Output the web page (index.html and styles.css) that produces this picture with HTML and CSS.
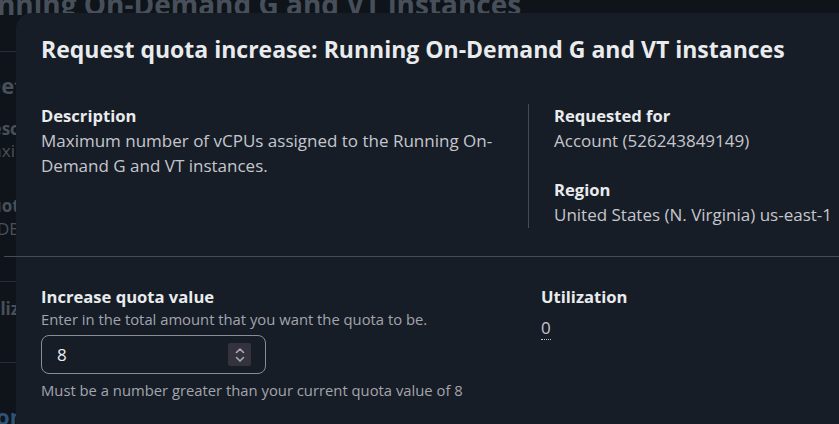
FILE: index.html
```html
<!DOCTYPE html>
<html>
<head>
<meta charset="utf-8">
<link rel="stylesheet" href="styles.css">
</head>
<body>
<div class="page">
  <div class="bg-title">Running On-Demand G and VT instances</div>
  <div class="bg-line l1"></div>
  <div class="bg-text t1">Details</div>
  <div class="bg-text t2">Description</div>
  <div class="bg-text t3">Maximum</div>
  <div class="bg-text t4">Quota</div>
  <div class="bg-text t5">DB1</div>
  <div class="bg-line l2"></div>
  <div class="bg-text t6">Utilization</div>
  <div class="bg-line l3"></div>
  <div class="bg-text t7">Information</div>
</div>
<div class="overlay"></div>
<div class="modal">
  <h1 class="modal-title">Request quota increase: Running On-Demand G and VT instances</h1>
  <div class="top-grid">
    <div class="col left">
      <div class="label">Description</div>
      <div class="value">Maximum number of vCPUs assigned to the Running On-Demand G and VT instances.</div>
    </div>
    <div class="col right">
      <div class="field">
        <div class="label">Requested for</div>
        <div class="value">Account (526243849149)</div>
      </div>
      <div class="field">
        <div class="label">Region</div>
        <div class="value nowrap">United States (N. Virginia) us-east-1</div>
      </div>
    </div>
  </div>
  <div class="divider"></div>
  <div class="bottom-grid">
    <div class="form">
      <div class="label">Increase quota value</div>
      <div class="hint">Enter in the total amount that you want the quota to be.</div>
      <div class="input">
        <span class="input-val">8</span>
        <span class="stepper">
          <svg width="12" height="18" viewBox="0 0 12 18"><path d="M2.5 6.5 L6 3 L9.5 6.5 M2.5 11.5 L6 15 L9.5 11.5" fill="none" stroke="#a9a9b5" stroke-width="1.6" stroke-linecap="round" stroke-linejoin="round"/></svg>
        </span>
      </div>
      <div class="hint after">Must be a number greater than your current quota value of 8</div>
    </div>
    <div class="util">
      <div class="label">Utilization</div>
      <div class="util-val"><span class="dotted">0</span></div>
    </div>
  </div>
</div>
</body>
</html>
```
FILE: styles.css
```css
* { box-sizing: border-box; }
html, body {
  margin: 0;
  padding: 0;
  width: 839px;
  height: 424px;
  overflow: hidden;
  background: #0f141a;
  font-family: "Open Sans", "Noto Sans", sans-serif;
}
.page {
  position: absolute;
  inset: 0;
  color: #8d99a8;
}
.bg-title {
  position: absolute;
  left: -40px;
  top: -15px;
  font-size: 28px;
  font-weight: 700;
  white-space: nowrap;
}
.bg-line {
  position: absolute;
  left: 0;
  width: 40px;
  height: 1px;
  background: #414d5c;
}
.l1 { top: 51px; }
.l2 { top: 281px; }
.l3 { top: 362px; }
.bg-text {
  position: absolute;
  white-space: nowrap;
  font-size: 17px;
}
.t1 { top: 70px; left: -15px; font-size: 22px; font-weight: 700; }
.t2 { top: 117px; left: -21px; font-weight: 700; }
.t3 { top: 139px; left: -23px; }
.t4 { top: 194px; left: -23px; font-weight: 700; }
.t5 { top: 217px; left: -3px; }
.t6 { top: 297px; left: -25px; font-weight: 700; }
.t7 { top: 401px; left: -109px; font-size: 22px; font-weight: 700; color: #539fe5; }

.overlay {
  position: absolute;
  inset: 0;
  background: rgba(15, 20, 26, 0.55);
}
.modal {
  position: absolute;
  left: 16px;
  top: 13px;
  width: 1000px;
  height: 500px;
  background: #161d26;
  border-top-left-radius: 16px;
  padding: 20px 0 0 25px;
  color: #c6c6cd;
}
.modal-title {
  margin: 0;
  font-size: 23px;
  line-height: 32px;
  font-weight: 700;
  color: #e9ebed;
}
.top-grid {
  display: flex;
  margin-top: 39px;
}
.col.left {
  width: 488px;
  padding-right: 18px;
  border-right: 1px solid #414d5c;
  min-height: 124px;
}
.col.right {
  padding-left: 25px;
  display: flex;
  flex-direction: column;
  gap: 25px;
}
.label {
  font-size: 16.6px;
  line-height: 24px;
  font-weight: 700;
  color: #e9ebed;
}
.value {
  font-size: 17px;
  line-height: 25px;
  color: #c6c6cd;
}
.nowrap { white-space: nowrap; }
.divider {
  height: 1px;
  background: #414d5c;
  margin: 28px 0 0 -37px;
}
.bottom-grid {
  display: flex;
  margin-top: 28px;
}
.form {
  width: 500px;
}
.hint {
  font-size: 14.8px;
  line-height: 20px;
  color: #a4a4ad;
}
.hint.after { margin-top: 6px; }
.input {
  margin-top: 6px;
  width: 225px;
  height: 39px;
  border: 1px solid #8c8c94;
  border-radius: 8px;
  display: flex;
  align-items: center;
  justify-content: space-between;
  padding: 0 14px 0 15px;
}
.input-val {
  font-size: 17px;
  color: #e9ebed;
}
.stepper {
  width: 23px;
  height: 23px;
  background: #33323d;
  border-radius: 2px;
  display: flex;
  align-items: center;
  justify-content: center;
}
.util-val {
  margin-top: 8px;
  font-size: 17px;
  line-height: 22px;
  color: #c6c6cd;
}
.dotted {
  border-bottom: 1px dotted #c6c6cd;
}
```
